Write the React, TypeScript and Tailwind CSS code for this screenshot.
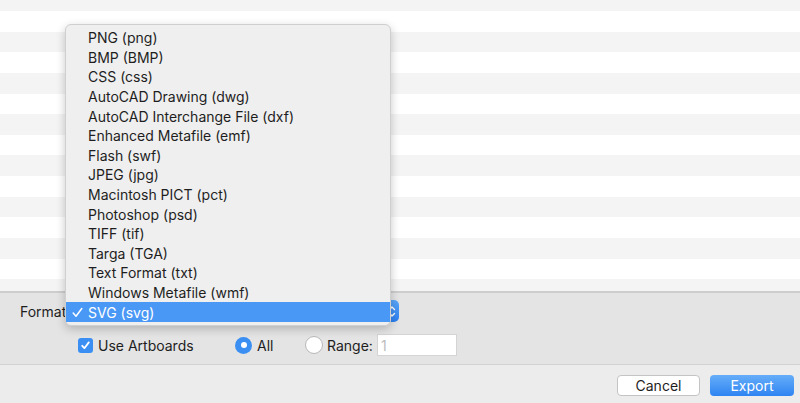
import React from "react";

const items = [
  "PNG (png)",
  "BMP (BMP)",
  "CSS (css)",
  "AutoCAD Drawing (dwg)",
  "AutoCAD Interchange File (dxf)",
  "Enhanced Metafile (emf)",
  "Flash (swf)",
  "JPEG (jpg)",
  "Macintosh PICT (pct)",
  "Photoshop (psd)",
  "TIFF (tif)",
  "Targa (TGA)",
  "Text Format (txt)",
  "Windows Metafile (wmf)",
  "SVG (svg)",
];

export default function App() {
  const stripes = Array.from({ length: 13 }, (_, i) => i);
  return (
    <div
      className="relative w-[800px] h-[403px] overflow-hidden bg-[#ececec] text-[14px] text-[#1e1e1e]"
      style={{ fontFamily: "Inter, 'Liberation Sans', sans-serif" }}
    >
      {/* striped list area */}
      <div className="flex flex-col h-[291px] bg-[#f4f4f4]">
        <div className="h-[11px] bg-[#f4f4f4]" />
        {stripes.map((i) => (
          <div
            key={i}
            className={`h-[20.65px] shrink-0 ${i % 2 === 0 ? "bg-white" : "bg-[#f4f4f4]"}`}
          />
        ))}
      </div>
      <div className="h-[2px] bg-[#cdcdcd]" />

      {/* options panel */}
      <div className="bg-[#e4e4e4] h-[72px] border-b border-[#d2d2d2] pt-[7px]">
        <div className="flex items-center h-[22px] pl-[20px]">
          <span className="w-[48px]">Format</span>
          <div className="w-[331px] h-[22px] rounded-[5px] bg-gradient-to-b from-[#5aa6f8] to-[#2a7ff0] flex justify-end items-center pr-[3px]">
            <svg width="8" height="13" viewBox="0 0 8 13" fill="none" stroke="white" strokeWidth="1.4" strokeLinecap="round" strokeLinejoin="round">
              <path d="M1.5 4.5 L4 2 L6.5 4.5" />
              <path d="M1.5 8.5 L4 11 L6.5 8.5" />
            </svg>
          </div>
        </div>
        <div className="flex items-center h-[22px] mt-[12px] pl-[78px]">
          <div className="w-[15px] h-[15px] rounded-[3px] bg-[#3b8ff2] flex items-center justify-center">
            <svg width="11" height="11" viewBox="0 0 11 11" fill="none" stroke="white" strokeWidth="1.8" strokeLinecap="round" strokeLinejoin="round">
              <path d="M2.2 5.8 L4.4 8.2 L8.8 2.4" />
            </svg>
          </div>
          <span className="ml-[5px] w-[95px] whitespace-nowrap">Use Artboards</span>
          <div className="ml-[42px] w-[17px] h-[17px] rounded-full bg-[#3b8ff2] flex items-center justify-center">
            <div className="w-[6px] h-[6px] rounded-full bg-white" />
          </div>
          <span className="ml-[5px] w-[16px]">All</span>
          <div className="ml-[32px] w-[18px] h-[18px] rounded-full bg-white border border-[#b8b8b8]" />
          <span className="ml-[4px] w-[46px] whitespace-nowrap">Range:</span>
          <div className="ml-[4px] w-[80px] h-[22px] bg-white border border-[#d4d4d4] flex items-center pl-[3px] text-[#bdbdbd]">
            1
          </div>
        </div>
      </div>

      {/* buttons */}
      <div className="flex justify-end gap-[10px] pr-[6px] pt-[10px]">
        <button className="w-[83px] h-[21px] rounded-[4px] bg-white border border-[#c4c4c4] text-[14px] leading-none text-[#1e1e1e]">
          Cancel
        </button>
        <button className="w-[84px] h-[21px] rounded-[4px] bg-gradient-to-b from-[#65adf9] to-[#2d84f1] text-[14px] leading-none text-white">
          Export
        </button>
      </div>

      {/* popup menu */}
      <div className="absolute left-[65px] top-[24px] w-[326px] h-[302px] rounded-[6px] bg-[#efefef] border border-[#cfcfcf] shadow-[0_3px_10px_rgba(0,0,0,0.22)] py-[3px]">
        {items.map((t, i) => {
          const sel = i === items.length - 1;
          return (
            <div
              key={t}
              className={`relative h-[19.6px] flex items-center pl-[22px] whitespace-nowrap ${
                sel ? "bg-[#4a98f6] text-white" : "text-[#1e1e1e]"
              }`}
            >
              {sel && (
                <svg className="absolute left-[6px]" width="11" height="11" viewBox="0 0 11 11" fill="none" stroke="white" strokeWidth="1.5" strokeLinecap="round" strokeLinejoin="round">
                  <path d="M1.2 6 L4 9.2 L9.8 1.5" />
                </svg>
              )}
              {t}
            </div>
          );
        })}
      </div>
    </div>
  );
}
